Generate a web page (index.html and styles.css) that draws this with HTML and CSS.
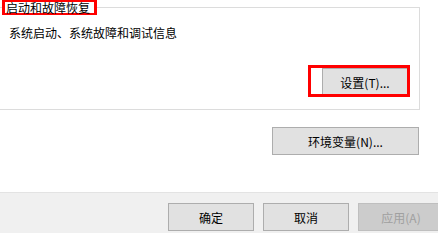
FILE: index.html
```html
<!DOCTYPE html>
<html lang="zh-CN">
<head>
    <meta charset="UTF-8">
    <title>系统属性</title>
    <link rel="stylesheet" href="styles.css">
</head>
<body>
    <div class="panel">
        <fieldset class="group">
            <legend class="group-title">启动和故障恢复</legend>
            <p class="group-desc">系统启动、系统故障和调试信息</p>
            <div class="group-actions">
                <div class="marked">
                    <button class="btn">设置(T)...</button>
                    <span class="mark-box"></span>
                </div>
            </div>
        </fieldset>
        <div class="env-row">
            <button class="btn btn-wide">环境变量(N)...</button>
        </div>
    </div>
    <div class="footer">
        <button class="btn">确定</button>
        <button class="btn">取消</button>
        <button class="btn" disabled>应用(A)</button>
    </div>
</body>
</html>
```

FILE: styles.css
```css
html, body {
    margin: 0;
    padding: 0;
    height: 100%;
}

body {
    font-family: "Noto Sans CJK SC", sans-serif;
    font-size: 12px;
    color: #000;
    background: #fff;
    overflow: hidden;
    display: flex;
    flex-direction: column;
}

.panel {
    flex: 1;
}

.group {
    margin: 0 18px 0 0;
    padding: 10px 11px 13px 2px;
    border: 1px solid #dcdcdc;
    border-left: none;
    min-width: 0;
}

.group-title {
    padding: 0 4px 0 1px;
    border: 3px solid #f00;
    border-top-width: 2px;
    border-bottom-width: 2px;
    line-height: 11px;
    font-size: 12px;
    margin-left: 0;
}

.group-desc {
    margin: 0 0 0 7px;
    line-height: 16px;
}

.group-actions {
    display: flex;
    justify-content: flex-end;
    margin-top: 27px;
}

.marked {
    position: relative;
}

.mark-box {
    position: absolute;
    left: -14px;
    top: -3px;
    right: -2px;
    bottom: -1px;
    border: 3px solid #f00;
    pointer-events: none;
}

.btn {
    font-family: inherit;
    font-size: 12px;
    color: #000;
    width: 86px;
    height: 28px;
    padding: 0;
    margin: 0;
    background: #e1e1e1;
    border: 1px solid #adadad;
    border-radius: 0;
    display: block;
}

.btn-wide {
    width: 147px;
}

.btn:disabled {
    background: #cccccc;
    border-color: #bfbfbf;
    color: #a0a0a0;
}

.env-row {
    display: flex;
    justify-content: flex-end;
    padding-right: 19px;
    margin-top: 17px;
}

.footer {
    height: 41px;
    box-sizing: border-box;
    background: #f0f0f0;
    border-top: 1px solid #e3e3e3;
    display: flex;
    gap: 9px;
    padding: 10px 0 0 168px;
}

.footer .btn {
    flex-shrink: 0;
}
```
